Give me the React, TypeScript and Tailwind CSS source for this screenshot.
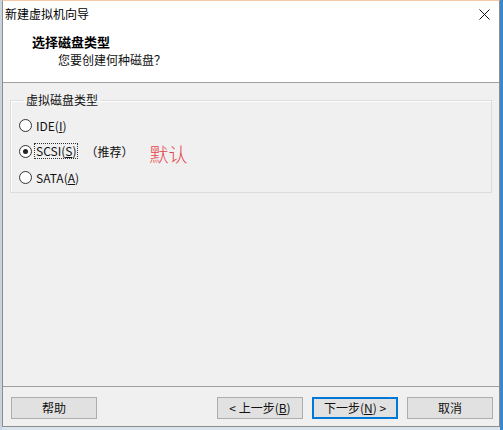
import React from "react";

const font = { fontFamily: '"Noto Sans CJK SC", "Microsoft YaHei", sans-serif' };

function Radio({ checked }: { checked?: boolean }) {
  return (
    <span className="flex h-[13px] w-[13px] shrink-0 items-center justify-center rounded-full border border-[#333333] bg-white">
      {checked && <span className="h-[5px] w-[5px] rounded-full bg-[#222222]" />}
    </span>
  );
}

function Btn({ children, primary }: { children: React.ReactNode; primary?: boolean }) {
  return (
    <div
      className={
        "flex h-[22px] w-[86px] items-center justify-center bg-[#e1e1e1] text-[12px] leading-none text-[#111] " +
        (primary ? "border-2 border-[#0078d7]" : "border border-[#adadad]")
      }
    >
      {children}
    </div>
  );
}

export default function App() {
  return (
    <div className="flex h-[430px] w-[503px] bg-[#dbe4ec]" style={font}>
      <div className="w-[2px] shrink-0 bg-[#c8d4e0]" />
      <div className="flex h-[427px] w-[498px] shrink-0 flex-col border-x border-b border-t border-x-[#8e8e8e] border-b-[#8e8e8e] border-t-[#f6c9a6] bg-white">
        {/* title bar */}
        <div className="flex h-[26px] shrink-0 items-center justify-between pl-[2px] pr-[9px]">
          <span className="text-[12px] leading-none text-black">新建虚拟机向导</span>
          <svg width="11" height="11" viewBox="0 0 11 11" className="mt-[1px]">
            <path d="M0.5 0.5 L10.5 10.5 M10.5 0.5 L0.5 10.5" stroke="#111" strokeWidth="1" fill="none" />
          </svg>
        </div>
        {/* header */}
        <div className="h-[56px] shrink-0 border-b border-[#a0a0a0] pt-[7px]">
          <div className="pl-[29px] text-[13px] font-bold leading-[16px] text-black">选择磁盘类型</div>
          <div className="mt-[2px] pl-[55px] text-[12px] leading-[16px] text-[#111]">您要创建何种磁盘？</div>
        </div>
        {/* body */}
        <div className="flex-1 bg-[#f0f0f0] px-[7px] pt-[9px]">
          <fieldset className="border border-[#dcdcdc] pb-[2px] pl-[8px] shadow-[inset_1px_1px_0_#ffffff]">
            <legend className="ml-[5px] px-[2px] text-[12px] leading-[16px] text-[#111]">虚拟磁盘类型</legend>
            <div className="pt-[4px]">
              <div className="flex h-[26px] items-center text-[12px] text-[#111]">
                <Radio />
                <span className="ml-[3px] px-[1px] leading-[15px]">
                  IDE(<span className="underline">I</span>)
                </span>
              </div>
              <div className="flex h-[26px] items-center text-[12px] text-[#111]">
                <Radio checked />
                <span className="ml-[2px] border border-dotted border-[#333] px-[1px] leading-[14px]">
                  SCSI(<span className="underline">S</span>)
                </span>
                <span className="ml-[7px] leading-[15px]">（推荐）</span>
                <span className="ml-[16px] mt-[5px] text-[19px] font-light leading-none text-[#e6444a]">默认</span>
              </div>
              <div className="flex h-[26px] items-center text-[12px] text-[#111]">
                <Radio />
                <span className="ml-[3px] px-[1px] leading-[15px]">
                  SATA(<span className="underline">A</span>)
                </span>
              </div>
            </div>
          </fieldset>
        </div>
        {/* footer */}
        <div className="flex h-[40px] shrink-0 items-start border-t border-[#a0a0a0] bg-[#f0f0f0] pl-[8px] pr-[6px] pt-[10px]">
          <Btn>帮助</Btn>
          <div className="ml-auto flex gap-[9px]">
            <Btn>
              &lt; 上一步(<span className="underline">B</span>)
            </Btn>
            <Btn primary>
              下一步(<span className="underline">N</span>) &gt;
            </Btn>
            <Btn>取消</Btn>
          </div>
        </div>
      </div>
      <div className="w-[3px] shrink-0 bg-[#3d86c8]" />
    </div>
  );
}
